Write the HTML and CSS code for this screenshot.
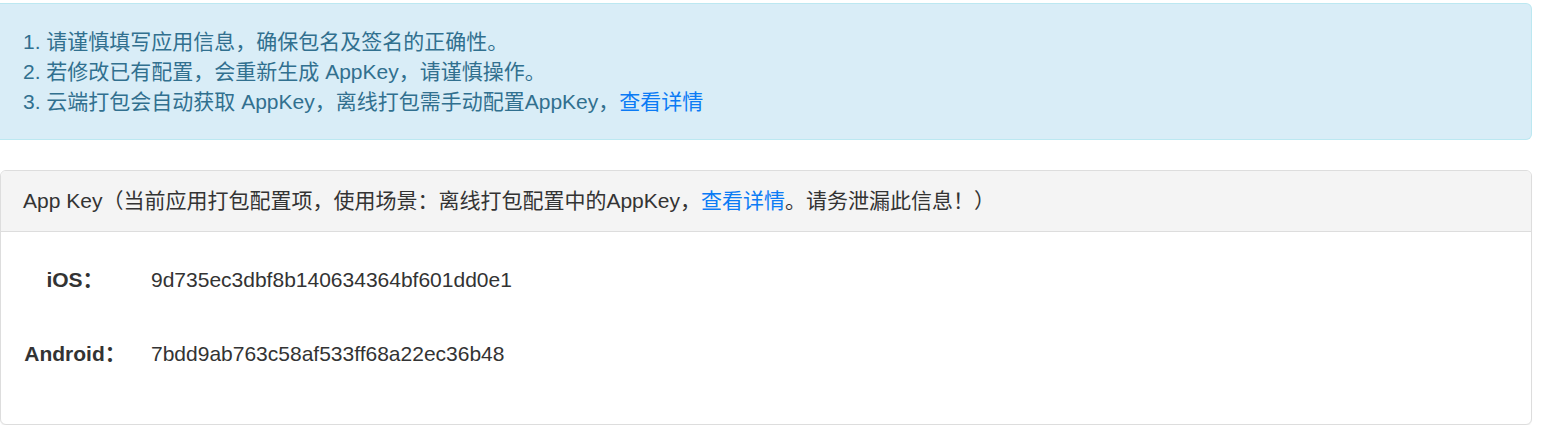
FILE: index.html
```html
<!DOCTYPE html>
<html lang="zh-CN">
<head>
<meta charset="utf-8">
<title>App Key</title>
<link rel="stylesheet" href="styles.css">
</head>
<body>
<div class="page">
  <div class="alert">
    <div class="line">1. 请谨慎填写应用信息，确保包名及签名的正确性。</div>
    <div class="line">2. 若修改已有配置，会重新生成 AppKey，请谨慎操作。</div>
    <div class="line">3. 云端打包会自动获取 AppKey，离线打包需手动配置AppKey，<a class="link" href="#">查看详情</a></div>
  </div>
  <div class="panel">
    <div class="panel-heading">App Key（当前应用打包配置项，使用场景：离线打包配置中的AppKey，<a class="link" href="#">查看详情</a>。请务泄漏此信息！）</div>
    <div class="panel-body">
      <div class="row">
        <div class="label">iOS：</div>
        <div class="value">9d735ec3dbf8b140634364bf601dd0e1</div>
      </div>
      <div class="row">
        <div class="label">Android：</div>
        <div class="value">7bdd9ab763c58af533ff68a22ec36b48</div>
      </div>
    </div>
  </div>
</div>
</body>
</html>
```

FILE: styles.css
```css
html, body {
  margin: 0;
  padding: 0;
  background: #ffffff;
}

body {
  font-family: "Liberation Sans", Arial, "Noto Sans CJK SC", sans-serif;
  font-size: 21px;
  line-height: 30px;
  color: #333333;
}

.page {
  padding: 3px 22px 0 0;
}

.alert {
  background: #d9edf7;
  border: 1.5px solid #bce8f1;
  border-left: none;
  border-radius: 0 6px 6px 0;
  color: #31708f;
  padding: 22.5px 22.5px 22.5px 23px;
  margin-bottom: 30px;
}

.link {
  color: #0b7bf5;
  text-decoration: none;
}

.panel {
  border: 1.5px solid #dddddd;
  border-radius: 6px;
  background: #ffffff;
  box-shadow: 0 1px 1px rgba(0, 0, 0, 0.05);
  overflow: hidden;
}

.panel-heading {
  background: #f4f4f4;
  border-bottom: 1.5px solid #dddddd;
  padding: 15px 22px;
  color: #333333;
}

.panel-body {
  padding: 22.5px 22px 22px 22px;
}

.row {
  display: grid;
  grid-template-columns: 104px 1fr;
  column-gap: 24px;
  align-items: center;
  min-height: 51px;
  margin-bottom: 22.5px;
}

.label {
  font-weight: bold;
  text-align: center;
  white-space: nowrap;
}

.value {
  color: #333333;
}
```
